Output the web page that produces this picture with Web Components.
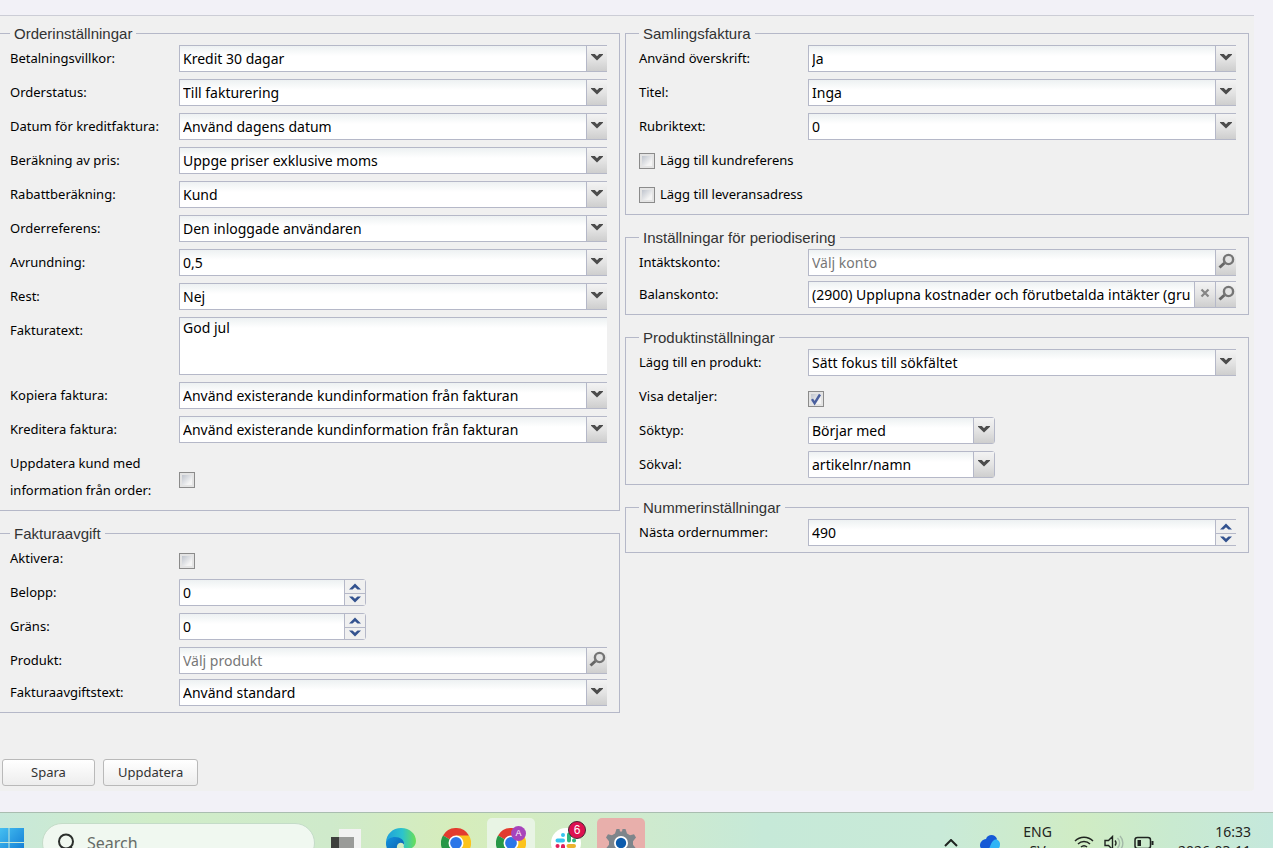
<!DOCTYPE html>
<html lang="sv">
<head>
<meta charset="utf-8">
<title>Orderinställningar</title>
<style>
  body {
    margin: 0;
    height: 100vh;
    overflow: hidden;
    background: #f2f1f7;
    color: #000;
    font: 13px/27px "Noto Sans", "Liberation Sans", sans-serif;
  }
</style>
</head>
<body>

<settings-panel>
  <settings-group slot="left" title-text="Orderinställningar">
    <select-field label="Betalningsvillkor:" value="Kredit 30 dagar"></select-field>
    <select-field label="Orderstatus:" value="Till fakturering"></select-field>
    <select-field label="Datum för kreditfaktura:" value="Använd dagens datum"></select-field>
    <select-field label="Beräkning av pris:" value="Uppge priser exklusive moms"></select-field>
    <select-field label="Rabattberäkning:" value="Kund"></select-field>
    <select-field label="Orderreferens:" value="Den inloggade användaren"></select-field>
    <select-field label="Avrundning:" value="0,5"></select-field>
    <select-field label="Rest:" value="Nej"></select-field>
    <area-field label="Fakturatext:" value="God jul"></area-field>
    <select-field label="Kopiera faktura:" value="Använd existerande kundinformation från fakturan"></select-field>
    <select-field label="Kreditera faktura:" value="Använd existerande kundinformation från fakturan"></select-field>
    <check-field label="Uppdatera kund med information från order:"></check-field>
  </settings-group>

  <settings-group slot="left" title-text="Fakturaavgift">
    <check-field label="Aktivera:"></check-field>
    <spin-field label="Belopp:" value="0" short></spin-field>
    <spin-field label="Gräns:" value="0" short></spin-field>
    <lookup-field label="Produkt:" placeholder="Välj produkt"></lookup-field>
    <select-field label="Fakturaavgiftstext:" value="Använd standard"></select-field>
  </settings-group>

  <settings-group slot="right" title-text="Samlingsfaktura">
    <select-field label="Använd överskrift:" value="Ja"></select-field>
    <select-field label="Titel:" value="Inga"></select-field>
    <select-field label="Rubriktext:" value="0"></select-field>
    <check-option label="Lägg till kundreferens"></check-option>
    <check-option label="Lägg till leveransadress"></check-option>
  </settings-group>

  <settings-group slot="right" title-text="Inställningar för periodisering">
    <lookup-field label="Intäktskonto:" placeholder="Välj konto"></lookup-field>
    <lookup-field label="Balanskonto:" value="(2900) Upplupna kostnader och förutbetalda intäkter (gruppkonto)"></lookup-field>
  </settings-group>

  <settings-group slot="right" title-text="Produktinställningar">
    <select-field label="Lägg till en produkt:" value="Sätt fokus till sökfältet"></select-field>
    <check-field label="Visa detaljer:" checked></check-field>
    <select-field label="Söktyp:" value="Börjar med" short></select-field>
    <select-field label="Sökval:" value="artikelnr/namn" short></select-field>
  </settings-group>

  <settings-group slot="right" title-text="Nummerinställningar">
    <spin-field label="Nästa ordernummer:" value="490"></spin-field>
  </settings-group>

  <push-button slot="actions">Spara</push-button>
  <push-button slot="actions">Uppdatera</push-button>
</settings-panel>

<task-bar></task-bar>

<script>
// Stamp a html string into an open shadow root
function stamp(host, html) {
  const template = document.createElement('template');
  template.innerHTML = html;
  host.attachShadow({ mode: 'open' }).appendChild(template.content.cloneNode(true));
  return host.shadowRoot;
}

/** Shared rules for one label + control row **/
const fieldStyle = `
  :host {
    display: grid;
    grid-template-columns: 169px minmax(0, 1fr);
    margin-bottom: 7px; }
  :host(:last-child) { margin-bottom: 0; }

  .label { padding-right: 14px; }

  .box {
    display: flex;
    box-sizing: border-box;
    height: 27px;
    border: 1px solid #b5b8c8;
    border-right: 0;
    background: #fff linear-gradient(#edf1f2, #fff 10px); }
  :host([short]) .box {
    width: 187px;
    border-right: 1px solid #b5b8c8;
    border-radius: 0 3px 3px 0; }

  input, select, textarea {
    flex: 1;
    min-width: 0;
    margin: 0;
    padding: 0 3px;
    border: 0;
    outline: none;
    background: none;
    color: #000;
    font: 14px/25px "Noto Sans", "Liberation Sans", sans-serif; }
  input::placeholder { color: #777; opacity: 1; }

  .trigger {
    display: flex;
    justify-content: center;
    align-items: center;
    box-sizing: border-box;
    width: 21px;
    padding: 0 0 3px;
    border: 0;
    border-left: 1px solid #b5b8c8;
    background: linear-gradient(#f3f3f3, #e4e4e4 50%, #cecece); }
`;

/** Grey checkbox with a sunken inner square **/
const checkStyle = `
  input[type=checkbox] {
    appearance: none;
    box-sizing: border-box;
    flex: none;
    width: 16px;
    height: 16px;
    margin: 0;
    padding: 2px;
    border: 1px solid #8b8b8b;
    background: linear-gradient(135deg, #bfc4cd, #f4f4f4 75%) content-box, #e4e4e4; }
  .tick {
    display: grid;
    grid-template: 16px / 16px;
    align-items: start; }
  .tick > * { grid-area: 1 / 1; }
  .tick svg { display: none; pointer-events: none; }
  input:checked + svg { display: block; }
`;

const tickSvg = `<svg width="16" height="16" viewBox="0 0 16 16"><path d="M4 8.2l2.6 4L12 3.5" fill="none" stroke="#4a5f9e" stroke-width="2.4"/></svg>`;

class SettingsPanel extends HTMLElement {
  constructor() {
    super();
    stamp(this, `
    <style>
      :host {
        display: block;
        margin: 15px 19px 21px 0;
        padding: 8px 5px 5px 0;
        border-top: 1px solid #cccdd6;
        border-radius: 0 0 4px 0;
        background: #f0f0f0; }

      /* the first column starts a little outside of the window */
      .columns {
        display: grid;
        grid-template-columns: 1fr 1fr;
        gap: 5px;
        margin-left: -4px; }
      .column {
        display: flex;
        flex-direction: column;
        gap: 13px;
        min-width: 0; }
      .actions {
        display: flex;
        gap: 8px;
        padding: 46px 2px 0; }
    </style>
    <main>
      <div class="columns">
        <div class="column"><slot name="left"></slot></div>
        <div class="column"><slot name="right"></slot></div>
      </div>
      <div class="actions"><slot name="actions"></slot></div>
    </main>
    `);
  }
}

class SettingsGroup extends HTMLElement {
  constructor() {
    super();
    const root = stamp(this, `
    <style>
      :host { display: block; }
      fieldset {
        min-width: 0;
        margin: 0;
        padding: 2px 12px 6px 13px;
        border: 1px solid #b5b8c8; }
      legend {
        padding: 0 4px;
        color: #333;
        font: 15px/19px "Liberation Sans", Arial, sans-serif; }
    </style>
    <fieldset>
      <legend></legend>
      <slot></slot>
    </fieldset>
    `);
    root.querySelector('legend').textContent = this.getAttribute('title-text');
  }
}

class SelectField extends HTMLElement {
  constructor() {
    super();
    const root = stamp(this, `
    <style>
      ${fieldStyle}
      .box { display: grid; grid-template-columns: minmax(0, 1fr) 21px; }
      select { appearance: none; grid-area: 1 / 1 / 2 / 3; padding-right: 24px; }
      .trigger { grid-area: 1 / 2; pointer-events: none; }
    </style>
    <label class="label" for="control"></label>
    <div class="box">
      <select id="control"><option></option></select>
      <span class="trigger">
        <svg width="12" height="8" viewBox="0 0 12 8"><path d="M0 1h3.800L6 3.300 8.200 1H12v.8L6 7.600 0 1.800z" fill="#4c4c4c"/></svg>
      </span>
    </div>
    `);
    root.querySelector('label').textContent = this.getAttribute('label');
    root.querySelector('option').textContent = this.getAttribute('value');
  }
}

class AreaField extends HTMLElement {
  constructor() {
    super();
    const root = stamp(this, `
    <style>
      ${fieldStyle}
      .box { height: 58px; }
      textarea { resize: none; line-height: 20px; }
    </style>
    <label class="label" for="control"></label>
    <div class="box"><textarea id="control"></textarea></div>
    `);
    root.querySelector('label').textContent = this.getAttribute('label');
    root.querySelector('textarea').textContent = this.getAttribute('value');
  }
}

class SpinField extends HTMLElement {
  constructor() {
    super();
    const root = stamp(this, `
    <style>
      ${fieldStyle}
      .spin {
        display: grid;
        grid-template-rows: 1fr 1fr;
        width: 20px;
        border-left: 1px solid #b5b8c8; }
      button {
        display: flex;
        justify-content: center;
        align-items: center;
        min-height: 0;
        padding: 0;
        border: 0;
        background: #f0f0f0; }
      button + button { border-top: 1px solid #b5b8c8; }
    </style>
    <label class="label" for="control"></label>
    <div class="box">
      <input id="control" type="text" inputmode="numeric">
      <div class="spin">
        <button type="button" aria-label="Öka"><svg width="12" height="7" viewBox="0 0 12 7"><path d="M0 6.5L6 .5l6 6H8.5L6 4.3 3.5 6.5z" fill="#33528f"/></svg></button>
        <button type="button" aria-label="Minska"><svg width="12" height="7" viewBox="0 0 12 7"><path d="M0 .5h3.5L6 2.7 8.5 .5H12l-6 6z" fill="#33528f"/></svg></button>
      </div>
    </div>
    `);
    root.querySelector('label').textContent = this.getAttribute('label');
    root.querySelector('input').value = this.getAttribute('value');
  }
}

class LookupField extends HTMLElement {
  constructor() {
    super();
    const value = this.getAttribute('value') || '';
    const clear = value ? `
      <button class="trigger" type="button" aria-label="Rensa">
        <svg width="10" height="10" viewBox="0 0 10 10"><path d="M1.5 1.5l7 7M8.5 1.5l-7 7" stroke="#858585" stroke-width="2.2"/></svg>
      </button>` : '';
    const root = stamp(this, `
    <style>
      ${fieldStyle}
      :host { margin-bottom: 5px; }
    </style>
    <label class="label" for="control"></label>
    <div class="box">
      <input id="control" type="text">
      ${clear}
      <button class="trigger" type="button" aria-label="Sök">
        <svg width="17" height="17" viewBox="0 0 17 17" fill="none">
          <path d="M1.5 14.5L6.5 10" stroke="#666" stroke-width="3"/>
          <circle cx="10.5" cy="6.5" r="4.6" fill="#e4e4e4" stroke="#757575" stroke-width="2.4"/>
        </svg>
      </button>
    </div>
    `);
    const input = root.querySelector('input');
    root.querySelector('label').textContent = this.getAttribute('label');
    input.value = value;
    input.placeholder = this.getAttribute('placeholder') || '';
  }
}

class CheckField extends HTMLElement {
  constructor() {
    super();
    const root = stamp(this, `
    <style>
      ${fieldStyle}
      ${checkStyle}
      :host { align-items: center; }
      .tick { margin-top: 5px; }
    </style>
    <label class="label" for="control"></label>
    <div class="tick"><input id="control" type="checkbox">${tickSvg}</div>
    `);
    root.querySelector('label').textContent = this.getAttribute('label');
    root.querySelector('input').checked = this.hasAttribute('checked');
  }
}

// Checkbox with its label on the right
class CheckOption extends HTMLElement {
  constructor() {
    super();
    const root = stamp(this, `
    <style>
      ${checkStyle}
      :host {
        display: flex;
        align-items: center;
        gap: 5px;
        height: 27px;
        margin-bottom: 7px; }
      :host(:last-child) { margin-bottom: 0; }
    </style>
    <div class="tick"><input id="control" type="checkbox">${tickSvg}</div>
    <label for="control"></label>
    `);
    root.querySelector('label').textContent = this.getAttribute('label');
  }
}

class PushButton extends HTMLElement {
  constructor() {
    super();
    stamp(this, `
    <style>
      :host { display: block; }
      button {
        box-sizing: border-box;
        min-width: 93px;
        height: 27px;
        padding: 0 14px;
        border: 1px solid #b9b9b9;
        border-radius: 3px;
        background: linear-gradient(#fff, #ededed);
        color: #333;
        font: inherit;
        line-height: 25px; }
    </style>
    <button type="button"><slot></slot></button>
    `);
  }
}

/** Taskbar tile, slot holds the icon **/
class TaskTile extends HTMLElement {
  constructor() {
    super();
    stamp(this, `
    <style>
      :host { display: block; }
      button {
        display: flex;
        justify-content: center;
        align-items: center;
        position: relative;
        width: 48px;
        height: 50px;
        padding: 0;
        border: 0;
        border-radius: 5px;
        background: none; }
      :host([tone=active]) button { background: #e8f4e4; }
      :host([tone=alert]) button { background: #e8afab; }
    </style>
    <button type="button"><slot></slot></button>
    `);
    this.shadowRoot.querySelector('button').setAttribute('aria-label', this.getAttribute('label'));
  }
}

const chromeSvg = `
  <svg width="30" height="30" viewBox="0 0 30 30">
    <path d="M15 15L2 7.5A15 15 0 0 1 28 7.5z" fill="#e33b2e"/>
    <path d="M15 15V7.5h13A15 15 0 0 1 15 30z" fill="#fcc31c"/>
    <path d="M15 15l6 4-6 11A15 15 0 0 1 2 7.5z" fill="#279847"/>
    <circle cx="15" cy="15" r="7.5" fill="#fff"/>
    <circle cx="15" cy="15" r="5.9" fill="#2b76e8"/>
  </svg>`;

class TaskBar extends HTMLElement {
  constructor() {
    super();
    stamp(this, `
    <style>
      :host {
        display: flex;
        align-items: center;
        box-sizing: border-box;
        height: 61px;
        padding-right: 22px;
        border-top: 1px solid #a9bdb0;
        background: linear-gradient(90deg, #c8e8da, #d0edc8 12%, #cfeacb 26%, #d6edbb 36%, #cfeacd 50%, #c6e9d8 60%, #c9ead8 74%, #d0ecc4 85%, #c9ead0 92%, #c5e8dc);
        color: #1f2420;
        font-size: 14px;
        line-height: 19px; }
      svg { display: block; flex: none; }

      .start { margin-left: -6px; padding: 0; border: 0; background: none; }
      .search {
        display: flex;
        align-items: center;
        gap: 12px;
        box-sizing: border-box;
        width: 273px;
        height: 40px;
        margin: 0 7px 0 18px;
        padding: 0 14px;
        border: 1px solid #c4dcc8;
        border-radius: 20px;
        background: #f0f8f0; }
      .search input {
        flex: 1;
        min-width: 0;
        padding: 0;
        border: 0;
        background: none;
        font: 16px/24px "Noto Sans", sans-serif; }
      .search input::placeholder { color: #666b67; opacity: 1; }

      .apps { display: flex; gap: 7px; flex: 1; }
      .badge {
        position: absolute;
        right: 4px;
        top: 3px;
        width: 16px;
        border: 1px solid #4a2633;
        border-radius: 50%;
        background: #dd1150;
        color: #fff;
        font-size: 12px;
        line-height: 16px;
        text-align: center; }
      .profile {
        position: absolute;
        right: 9px;
        top: 8px;
        width: 15px;
        border-radius: 50%;
        background: #a744bb;
        color: #fff;
        font-size: 9px;
        line-height: 15px;
        text-align: center; }

      .tray { display: flex; align-items: center; }
      .cloud { margin-left: 22px; }
      .lang, .clock { padding-bottom: 4px; }
      .lang { margin: 0 22px 0 23px; text-align: center; }
      .status { display: flex; gap: 10px; margin-right: 24px; }
      .clock { text-align: right; }
    </style>

    <button class="start" type="button" aria-label="Start">
      <svg width="30" height="30" viewBox="0 0 30 30">
        <defs><linearGradient id="win" x1="0" y1="0" x2="1" y2="1"><stop offset="0" stop-color="#4cc8f5"/><stop offset="1" stop-color="#0a72d0"/></linearGradient></defs>
        <path d="M0 0h14.500v14H0zM15.500 0H30v14H15.500zM0 15h14.500V30H0zM15.500 15H30V30H15.500z" fill="url(#win)"/>
      </svg>
    </button>

    <label class="search">
      <svg width="18" height="20" viewBox="0 0 18 20" fill="none" stroke="#2b2f2c" stroke-width="2"><circle cx="9" cy="8.5" r="7"/><path d="M13.5 14l4 5"/></svg>
      <input type="text" placeholder="Search" aria-label="Search">
    </label>

    <div class="apps">
      <task-tile label="Task view">
        <svg width="30" height="30" viewBox="0 0 30 30">
          <path d="M8 1h22v22H8z" fill="#f2f2f2"/>
          <path d="M0 9h23v21H0z" fill="#3d3f3c"/>
          <path d="M8 9h15v14H8z" fill="#9a9b99"/>
        </svg>
      </task-tile>
      <task-tile label="Edge">
        <svg width="30" height="30" viewBox="0 0 30 30">
          <defs>
            <linearGradient id="edgeTop" x1="0" x2="1"><stop offset="0" stop-color="#1f9fdc"/><stop offset=".55" stop-color="#2cc3cc"/><stop offset="1" stop-color="#6adf55"/></linearGradient>
            <linearGradient id="edgeLow" x1="0" x2="1" y2="1"><stop offset="0" stop-color="#1192de"/><stop offset="1" stop-color="#0b4f9e"/></linearGradient>
          </defs>
          <path d="M0 15C0 6 7 0 15 0c9 0 15 6 15 13 0 5-4 8-8 8-4 0-5-2-4-4 1-2-1-5-5-5C6 12 2 14 0 18z" fill="url(#edgeTop)"/>
          <path d="M0 15c1-4 5-6 9-6 6 0 10 4 9 8-1-3-6-3-7 1-1 6 4 10 10 11-9 4-21-2-21-14z" fill="url(#edgeLow)"/>
        </svg>
      </task-tile>
      <task-tile label="Chrome">${chromeSvg}</task-tile>
      <task-tile label="Chrome A" tone="active">${chromeSvg}<span class="profile">A</span></task-tile>
      <task-tile label="Slack">
        <svg width="30" height="30" viewBox="0 0 30 30">
          <circle cx="15" cy="15" r="15" fill="#fff"/>
          <g fill="none" stroke-width="4" stroke-linecap="round">
            <path d="M12 7v.1M6.5 12.5H12" stroke="#36c5f0"/>
            <path d="M18 6.5v6M23 12.5h.1" stroke="#2eb67d"/>
            <path d="M17.5 18H23M18 23v.1" stroke="#ecb22e"/>
            <path d="M12 18v5.5M6.5 18h.1" stroke="#e01e5a"/>
          </g>
        </svg>
        <span class="badge">6</span>
      </task-tile>
      <task-tile label="Settings" tone="alert">
        <svg width="30" height="30" viewBox="0 0 30 30">
          <path d="M10.500 1h3l.5 2.500h2L16.500 1h3l1.500 4.500 3 1.700 4-1L30 9.500l-3 3.800v3.400l3 3.800-2 3.300-4-1-3 1.700L19.500 29h-9L9 24.500l-3-1.700-4 1-2-3.300 3-3.800v-3.400L0 9.500l2-3.300 4 1 3-1.700z" fill="#7d858b"/>
          <circle cx="15" cy="15" r="7" fill="#fff"/>
          <circle cx="15" cy="15" r="5.2" fill="#0c5cad"/>
        </svg>
      </task-tile>
    </div>

    <div class="tray">
      <svg width="14" height="8" viewBox="0 0 14 8" fill="none" stroke="#1f2420" stroke-width="2"><path d="M1 7l6-6 6 6"/></svg>
      <svg class="cloud" width="20" height="18" viewBox="0 0 20 18">
        <path d="M6 5C7 2 9 1 11.500 1 14 1 16 2.500 17 5l-6 11H4.500A4.500 4.500 0 0 1 0 11.500C0 8 2.500 5.500 6 5z" fill="#1559d6"/>
        <path d="M15.500 5.500a4.500 4.500 0 0 1 4.500 5c0 3.500-2 6-5.500 6H6c2-.5 3-1.500 4-4s2.500-6.500 5.500-7z" fill="#2fb4f6"/>
      </svg>
      <div class="lang">ENG<br>SV</div>
      <div class="status">
        <svg width="20" height="16" viewBox="0 0 20 16" fill="none" stroke="#1f2420" stroke-width="1.5">
          <path d="M1 6a12.500 12.500 0 0 1 18 0M4 9a8.500 8.500 0 0 1 12 0M7 12a4.500 4.500 0 0 1 6 0"/><circle cx="10" cy="14" r="1.2" fill="#1f2420" stroke="none"/>
        </svg>
        <svg width="20" height="16" viewBox="0 0 20 16" fill="none" stroke="#1f2420" stroke-width="1.4">
          <path d="M1 5.500h3.500L8.500 1.500v13l-4-4H1zM11 5.500a4 4 0 0 1 0 5"/><path d="M13.500 3a7 7 0 0 1 0 10M16 1a10 10 0 0 1 0 14" stroke="#a3b8a8"/>
        </svg>
        <svg width="20" height="16" viewBox="0 0 20 16" fill="none" stroke="#1f2420" stroke-width="1.5">
          <rect x="1" y="2.5" width="15.5" height="11" rx="2.5"/><path d="M3.500 5h3.500v6H3.500z" fill="#1f2420" stroke="none"/><path d="M18.500 6v4" stroke-width="2"/>
        </svg>
      </div>
      <div class="clock">16:33<br>2026-03-11</div>
    </div>
    `);
  }
}

// Register the custom elements
customElements.define('settings-panel', SettingsPanel);
customElements.define('settings-group', SettingsGroup);
customElements.define('select-field', SelectField);
customElements.define('area-field', AreaField);
customElements.define('spin-field', SpinField);
customElements.define('lookup-field', LookupField);
customElements.define('check-field', CheckField);
customElements.define('check-option', CheckOption);
customElements.define('push-button', PushButton);
customElements.define('task-tile', TaskTile);
customElements.define('task-bar', TaskBar);
</script>
</body>
</html>
